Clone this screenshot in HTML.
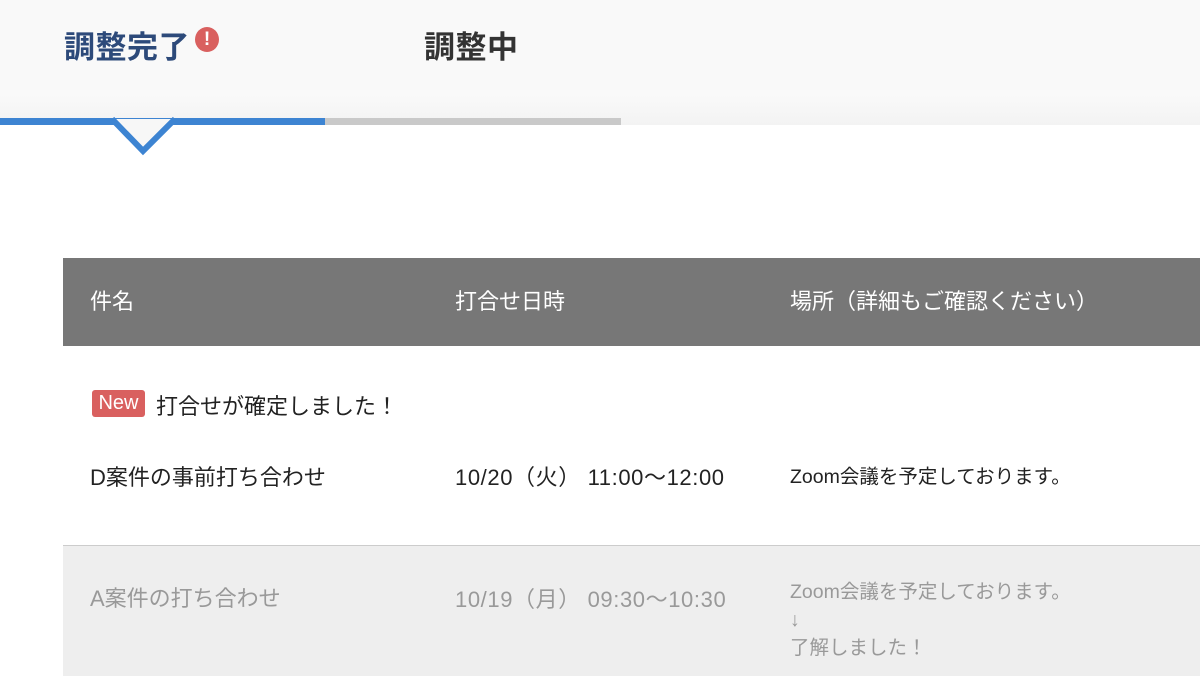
<!DOCTYPE html>
<html><head><meta charset="utf-8"><style>
body{margin:0;width:1200px;height:675px;overflow:hidden;background:#fff;font-family:"Liberation Sans","Noto Sans CJK JP",sans-serif;position:relative}
.hdr{position:absolute;left:0;top:0;width:1200px;height:125px;background:linear-gradient(#f9f9f9 0,#f9f9f9 95px,#f3f3f3 125px)}
.t{position:absolute;font-weight:bold;font-size:31px;top:22px;letter-spacing:0.5px}
.bl{position:absolute;left:0;top:118px;width:325px;height:7px;background:#3d84d2}
.gl{position:absolute;left:325px;top:118px;width:296px;height:7px;background:#c9c9c9}
.th{position:absolute;left:63px;top:258px;width:1137px;height:88px;background:#777;color:#fff;font-size:22px}
.th span{position:absolute;top:26px}
.a{position:absolute;font-size:22px;color:#222;white-space:nowrap}
.g{color:#999}
.sm{font-size:19.5px}
</style></head><body>
<div class="hdr"></div>
<div class="t" style="left:64px;color:#2d4a7a">調整完了</div>
<div style="position:absolute;left:195px;top:27px;width:24px;height:25px;border-radius:50%;background:#d9605f;color:#fff;font-weight:bold;font-size:19px;text-align:center;line-height:25px">!</div>
<div class="t" style="left:424px;color:#333">調整中</div>
<div class="bl"></div><div class="gl"></div>
<svg style="position:absolute;left:0;top:0" width="300" height="170"><polyline points="112,119 143,151 175,119" fill="#f7f7f7" stroke="#3d84d2" stroke-width="6"/></svg>
<div class="th"><span style="left:27px">件名</span><span style="left:392px">打合せ日時</span><span style="left:727px">場所（詳細もご確認ください）</span></div>
<div style="position:absolute;left:92px;top:390px;width:53px;height:27px;background:#d9605f;border-radius:3px;color:#fff;font-size:20px;text-align:center;line-height:27px">New</div>
<div class="a" style="left:156px;top:389px">打合せが確定しました！</div>
<div class="a" style="left:90px;top:460px">D案件の事前打ち合わせ</div>
<div class="a" style="left:455px;top:460px;letter-spacing:0.6px">10/20（火） 11:00～12:00</div>
<div class="a sm" style="left:790px;top:460px">Zoom会議を予定しております。</div>
<div style="position:absolute;left:63px;top:545px;width:1137px;height:130px;background:#eee;border-top:1px solid #ccc"></div>
<div class="a g" style="left:90px;top:581px">A案件の打ち合わせ</div>
<div class="a g" style="left:455px;top:582px;letter-spacing:0.6px">10/19（月） 09:30～10:30</div>
<div class="a g sm" style="left:790px;top:578px;line-height:28px">Zoom会議を予定しております。<br>↓<br>了解しました！</div>
</body></html>
